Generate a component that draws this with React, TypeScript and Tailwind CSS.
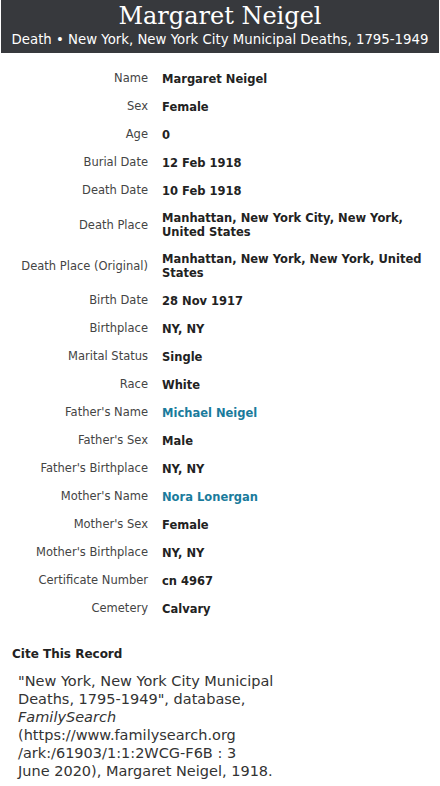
import React from 'react';

type Row = { label: string; value: string; link?: boolean };

const rows: Row[] = [
  { label: 'Name', value: 'Margaret Neigel' },
  { label: 'Sex', value: 'Female' },
  { label: 'Age', value: '0' },
  { label: 'Burial Date', value: '12 Feb 1918' },
  { label: 'Death Date', value: '10 Feb 1918' },
  { label: 'Death Place', value: 'Manhattan, New York City, New York, United States' },
  { label: 'Death Place (Original)', value: 'Manhattan, New York, New York, United States' },
  { label: 'Birth Date', value: '28 Nov 1917' },
  { label: 'Birthplace', value: 'NY, NY' },
  { label: 'Marital Status', value: 'Single' },
  { label: 'Race', value: 'White' },
  { label: "Father's Name", value: 'Michael Neigel', link: true },
  { label: "Father's Sex", value: 'Male' },
  { label: "Father's Birthplace", value: 'NY, NY' },
  { label: "Mother's Name", value: 'Nora Lonergan', link: true },
  { label: "Mother's Sex", value: 'Female' },
  { label: "Mother's Birthplace", value: 'NY, NY' },
  { label: 'Certificate Number', value: 'cn 4967' },
  { label: 'Cemetery', value: 'Calvary' },
];

export default function App() {
  return (
    <div className="min-h-[786px] w-[440px] bg-white font-['DejaVu_Sans',Verdana,sans-serif]">
      <header className="mx-px flex h-[53px] flex-col items-center bg-[#37393d] text-white">
        <h1 className="mt-[1px] font-['DejaVu_Serif',serif] text-[24px] leading-[30px]">Margaret Neigel</h1>
        <p className="whitespace-nowrap text-[13.3px] leading-[18px]">
          Death • New York, New York City Municipal Deaths, 1795-1949
        </p>
      </header>

      <dl className="mt-[18px] flex flex-col gap-[13px]">
        {rows.map((r) => (
          <div key={r.label} className="flex items-center">
            <dt className="w-[148px] shrink-0 text-right text-[11.5px] leading-[15px] text-[#444]">{r.label}</dt>
            <dd
              className={`ml-[14px] w-[262px] text-[11.5px] font-bold leading-[14px] ${
                r.link ? 'text-[#1a7b9c]' : 'text-[#222]'
              }`}
            >
              {r.value}
            </dd>
          </div>
        ))}
      </dl>

      <section className="mt-[30px] px-3">
        <h2 className="text-[12px] font-bold leading-[16px] text-[#222]">Cite This Record</h2>
        <p className="mt-[10px] w-[270px] pl-[6px] text-[14.5px] leading-[18px] text-[#333]">
          "New York, New York City Municipal Deaths, 1795-1949", database, <i>FamilySearch</i> (https://www.familysearch.org
          /ark:/61903/1:1:2WCG-F6B : 3 June&nbsp;2020), Margaret Neigel, 1918.
        </p>
      </section>
    </div>
  );
}
